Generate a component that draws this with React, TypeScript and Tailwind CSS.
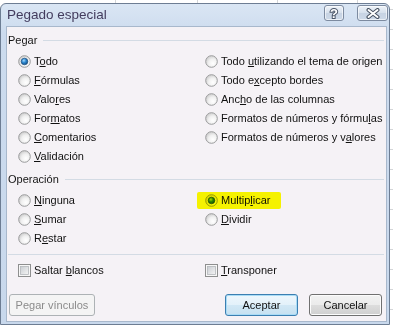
import React from "react";

const FONT = "font-['Liberation_Sans',Arial,sans-serif]";

function Label({ parts, className = "" }: { parts: [string, string, string]; className?: string }) {
  return (
    <span className={`text-[11px] leading-[13px] text-[#111] whitespace-nowrap ${className}`}>
      {parts[0]}
      {parts[1] && <span className="underline underline-offset-[1px] decoration-1">{parts[1]}</span>}
      {parts[2]}
    </span>
  );
}

function RadioIcon({ checked }: { checked?: boolean }) {
  return (
    <svg width="13" height="13" viewBox="0 0 13 13" className="shrink-0">
      <defs>
        <radialGradient id="rgIn" cx="0.62" cy="0.66" r="0.62">
          <stop offset="0" stopColor="#ffffff" />
          <stop offset="0.6" stopColor="#f0f0f0" />
          <stop offset="1" stopColor="#d4d4d4" />
        </radialGradient>
        <radialGradient id="rgDot" cx="0.4" cy="0.35" r="0.7">
          <stop offset="0" stopColor="#a6dafc" />
          <stop offset="0.45" stopColor="#2f8ad2" />
          <stop offset="1" stopColor="#134a7e" />
        </radialGradient>
      </defs>
      <circle cx="6.5" cy="6.5" r="5.8" fill="url(#rgIn)" stroke="#9a9b9c" strokeWidth="1" />
      {checked && <circle cx="6.5" cy="6.5" r="3.3" fill="url(#rgDot)" stroke="#1c4f80" strokeWidth="0.7" />}
    </svg>
  );
}

function CheckIcon() {
  return (
    <svg width="13" height="13" viewBox="0 0 13 13" className="shrink-0">
      <defs>
        <linearGradient id="cbIn" x1="0" y1="0" x2="1" y2="1">
          <stop offset="0" stopColor="#c9cdd2" />
          <stop offset="1" stopColor="#f5f5f5" />
        </linearGradient>
      </defs>
      <rect x="0.5" y="0.5" width="12" height="12" fill="#f7f7f7" stroke="#8e8f8f" />
      <rect x="2.5" y="2.5" width="8" height="8" fill="url(#cbIn)" stroke="#b4b7bb" strokeWidth="0.8" />
    </svg>
  );
}

function Radio({ parts, checked }: { parts: [string, string, string]; checked?: boolean }) {
  return (
    <div className="h-[19px] flex items-center gap-[3px]">
      <RadioIcon checked={checked} />
      <Label parts={parts} />
    </div>
  );
}

function GroupHeader({ text }: { text: string }) {
  return (
    <div className="h-[14px] flex items-center gap-[6px] pl-[1px] pr-[2px]">
      <span className="text-[11px] leading-[13px] text-[#151515]">{text}</span>
      <div className="flex-1 h-px bg-[#d3dbe4]" />
    </div>
  );
}

export default function App() {
  const gridX = [115, 197, 277, 357];
  const gridY = [9, 29, 49, 69, 89, 109, 129, 149, 169, 189, 209, 229, 249, 269, 289, 309];
  return (
    <div className={`relative w-[393px] h-[327px] bg-white overflow-hidden pt-[3px] ${FONT}`}>
      {gridX.map((x) => (
        <div key={x} className="absolute top-0 w-px h-[4px] bg-[#d4d6d8]" style={{ left: x }} />
      ))}
      {gridY.map((y) => (
        <div key={y} className="absolute left-[390px] w-[3px] h-px bg-[#d4d6d8]" style={{ top: y }} />
      ))}
      <div className="relative w-[390px] h-[322px] border border-[#6d7d93] rounded-t-[6px] bg-[linear-gradient(#dae6f4,#ccdbee_30px,#c8d8ec)] flex flex-col pl-[5px] pr-[2px] pb-[2px]">
        {/* Title bar */}
        <div className="h-[22px] flex items-start -ml-[5px] -mr-[2px] pl-[6px] pr-[1px]">
          <span className="mt-[3px] text-[13.5px] leading-[16px] text-[#433c5e]">Pegado especial</span>
          <div className="ml-auto flex items-start gap-[13px] pt-[1px]">
            <div className="w-[20px] h-[16px] rounded-[3px] border border-[#7d8ba0] bg-[linear-gradient(#eef3f9,#d6e0ec_50%,#c7d3e3_50%,#cdd9e8)] flex items-center justify-center shadow-[inset_0_0_0_1px_rgba(255,255,255,0.6)]">
              <span className="text-[13px] leading-[13px] font-bold text-white [-webkit-text-stroke:2px_#4a5568] [paint-order:stroke_fill]">?</span>
            </div>
            <div className="w-[31px] h-[16px] rounded-[3px] border border-[#7d8ba0] bg-[linear-gradient(#eef3f9,#d6e0ec_50%,#c7d3e3_50%,#cdd9e8)] flex items-center justify-center shadow-[inset_0_0_0_1px_rgba(255,255,255,0.6)]">
              <svg width="14" height="11" viewBox="0 0 14 11">
                <path d="M2.5 2 L11.5 9 M11.5 2 L2.5 9" stroke="#45505f" strokeWidth="4" strokeLinecap="round" />
                <path d="M2.5 2 L11.5 9 M11.5 2 L2.5 9" stroke="#ffffff" strokeWidth="2" strokeLinecap="round" />
              </svg>
            </div>
          </div>
        </div>
        {/* Client area */}
        <div className="flex-1 border border-[#a8b8cc] bg-[#f5f2f6] flex flex-col pt-[6px]">
          <GroupHeader text="Pegar" />
          <div className="mt-[5px] grid grid-cols-[187px_1fr] pl-[11px]">
            <div className="flex flex-col">
              <Radio parts={["T", "o", "do"]} checked />
              <Radio parts={["", "F", "órmulas"]} />
              <Radio parts={["Valo", "r", "es"]} />
              <Radio parts={["For", "m", "atos"]} />
              <Radio parts={["", "C", "omentarios"]} />
              <Radio parts={["", "V", "alidación"]} />
            </div>
            <div className="flex flex-col">
              <Radio parts={["Todo ", "u", "tilizando el tema de origen"]} />
              <Radio parts={["Todo e", "x", "cepto bordes"]} />
              <Radio parts={["Anc", "h", "o de las columnas"]} />
              <Radio parts={["Formatos de números y fórmu", "l", "as"]} />
              <Radio parts={["Formatos de números y v", "a", "lores"]} />
            </div>
          </div>
          <div className="mt-[6px]">
            <GroupHeader text="Operación" />
          </div>
          <div className="mt-[5px] grid grid-cols-[187px_1fr] pl-[11px]">
            <div className="flex flex-col">
              <Radio parts={["", "N", "inguna"]} />
              <Radio parts={["", "S", "umar"]} />
              <Radio parts={["R", "e", "star"]} />
            </div>
            <div className="flex flex-col">
              <div className="relative">
                <Radio parts={["Multip", "l", "icar"]} checked />
                <div className="absolute left-[-8px] top-[1px] w-[84px] h-[17px] bg-[#ffff00] mix-blend-multiply rounded-[2px]" />
              </div>
              <Radio parts={["", "D", "ividir"]} />
            </div>
          </div>
          <div className="mt-[6px] ml-[1px] mr-[2px] h-px bg-[#d3dbe4]" />
          <div className="mt-[6px] grid grid-cols-[187px_1fr] pl-[11px]">
            <div className="h-[19px] flex items-center gap-[3px]">
              <CheckIcon />
              <Label parts={["Saltar ", "b", "lancos"]} />
            </div>
            <div className="h-[19px] flex items-center gap-[3px]">
              <CheckIcon />
              <Label parts={["", "T", "ransponer"]} />
            </div>
          </div>
          <div className="mt-[14px] flex items-center pl-[2px] pr-[4px]">
            <div className="w-[86px] h-[22px] rounded-[3px] border border-[#adb2b5] bg-[#f4f4f4] flex items-center justify-center text-[11px] text-[#8b8b8b]">
              Pegar vínculos
            </div>
            <div className="ml-auto flex gap-[11px]">
              <div className="w-[73px] h-[22px] rounded-[3px] border border-[#3c7fb1] bg-[linear-gradient(#eef7fc,#e3f1fa_50%,#d2e8f5_50%,#c6e1f1)] shadow-[inset_0_0_0_1px_#a9dcf6] flex items-center justify-center text-[11px] text-[#111]">
                Aceptar
              </div>
              <div className="w-[73px] h-[22px] rounded-[3px] border border-[#707070] bg-[linear-gradient(#f2f2f2,#ebebeb_50%,#dddddd_50%,#cfcfcf)] shadow-[inset_0_0_0_1px_#fcfcfc] flex items-center justify-center text-[11px] text-[#111]">
                Cancelar
              </div>
            </div>
          </div>
        </div>
      </div>
    </div>
  );
}
